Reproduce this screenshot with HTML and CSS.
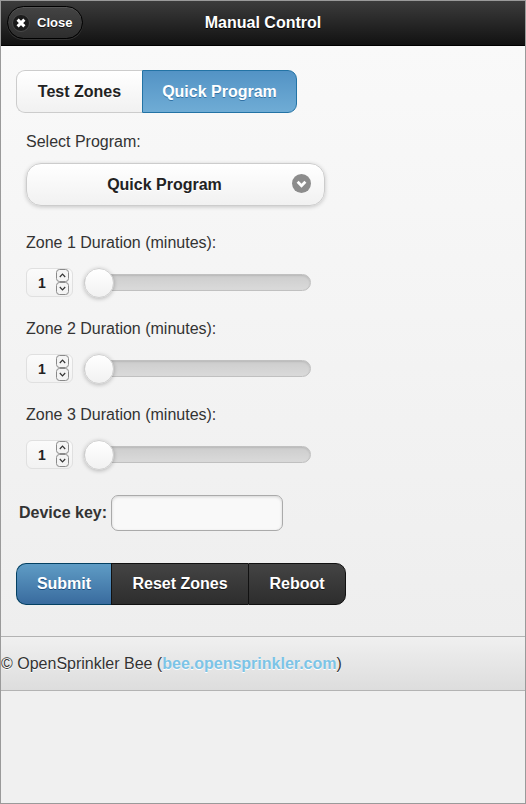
FILE: index.html
```html
<!DOCTYPE html>
<html>
<head>
<meta charset="utf-8">
<link rel="stylesheet" href="styles.css">
</head>
<body>
<div class="window">
  <header class="hdr">
    <a class="close-btn">
      <svg class="x-icon" width="18" height="18" viewBox="0 0 18 18"><circle cx="9" cy="9" r="8.5" fill="#1b1b1b" stroke="#4a4a4a" stroke-width="1"/><path d="M5.6 5.6 L12.4 12.4 M12.4 5.6 L5.6 12.4" stroke="#fff" stroke-width="3" stroke-linecap="butt"/></svg>
      <span>Close</span>
    </a>
    <h1 class="title">Manual Control</h1>
  </header>
  <main class="content">
    <div class="navbar">
      <span class="tab tab-first">Test Zones</span><span class="tab tab-active">Quick Program</span>
    </div>
    <div class="field">
      <div class="label label-first">Select Program:</div>
      <div class="select">
        <span class="select-text">Quick Program</span>
        <svg class="arrow" width="19" height="19" viewBox="0 0 19 19"><circle cx="9.5" cy="9.5" r="9.5" fill="#8c8c8c"/><path d="M5.6 7.8 L9.5 11.7 L13.4 7.8" stroke="#fff" stroke-width="2.8" fill="none"/></svg>
      </div>

      <div class="label label-zone">Zone 1 Duration (minutes):</div>
      <div class="row">
        <div class="spin"><span class="num">1</span><svg class="spin-arrows" width="13" height="27" viewBox="0 0 13 27"><rect x="0.5" y="0.5" width="12" height="12" rx="3" fill="#f4f4f4" stroke="#8a8a8a"/><rect x="0.5" y="13.5" width="12" height="12" rx="3" fill="#f4f4f4" stroke="#8a8a8a"/><path d="M3.8 8 L6.5 5.2 L9.2 8" stroke="#333" stroke-width="1.2" fill="none"/><path d="M3.8 18 L6.5 20.8 L9.2 18" stroke="#333" stroke-width="1.2" fill="none"/></svg></div>
        <div class="track"><span class="handle"></span></div>
      </div>

      <div class="label label-next">Zone 2 Duration (minutes):</div>
      <div class="row">
        <div class="spin"><span class="num">1</span><svg class="spin-arrows" width="13" height="27" viewBox="0 0 13 27"><rect x="0.5" y="0.5" width="12" height="12" rx="3" fill="#f4f4f4" stroke="#8a8a8a"/><rect x="0.5" y="13.5" width="12" height="12" rx="3" fill="#f4f4f4" stroke="#8a8a8a"/><path d="M3.8 8 L6.5 5.2 L9.2 8" stroke="#333" stroke-width="1.2" fill="none"/><path d="M3.8 18 L6.5 20.8 L9.2 18" stroke="#333" stroke-width="1.2" fill="none"/></svg></div>
        <div class="track"><span class="handle"></span></div>
      </div>

      <div class="label label-next">Zone 3 Duration (minutes):</div>
      <div class="row">
        <div class="spin"><span class="num">1</span><svg class="spin-arrows" width="13" height="27" viewBox="0 0 13 27"><rect x="0.5" y="0.5" width="12" height="12" rx="3" fill="#f4f4f4" stroke="#8a8a8a"/><rect x="0.5" y="13.5" width="12" height="12" rx="3" fill="#f4f4f4" stroke="#8a8a8a"/><path d="M3.8 8 L6.5 5.2 L9.2 8" stroke="#333" stroke-width="1.2" fill="none"/><path d="M3.8 18 L6.5 20.8 L9.2 18" stroke="#333" stroke-width="1.2" fill="none"/></svg></div>
        <div class="track"><span class="handle"></span></div>
      </div>
    </div>

    <div class="device">
      <label class="device-label">Device key:</label>
      <input class="device-input" type="password">
    </div>

    <div class="btn-group">
      <span class="btn btn-submit">Submit</span><span class="btn btn-dark btn-reset">Reset Zones</span><span class="btn btn-dark btn-reboot">Reboot</span>
    </div>
  </main>
  <footer class="ftr">© OpenSprinkler Bee (<a class="ftr-link">bee.opensprinkler.com</a>)</footer>
</div>
</body>
</html>
```

FILE: styles.css
```css
html, body {
  margin: 0;
  padding: 0;
}
body {
  font-family: "Liberation Sans", Arial, Helvetica, sans-serif;
  font-size: 16px;
  color: #333;
}
.window {
  width: 526px;
  height: 804px;
  box-sizing: border-box;
  border: 1px solid #9a9a9a;
  background: #f0f0f0;
  display: flex;
  flex-direction: column;
  overflow: hidden;
}

/* header */
.hdr {
  height: 44px;
  flex: none;
  border-bottom: 1px solid #000;
  background: linear-gradient(#3c3c3c, #111);
  display: grid;
  grid-template-columns: 1fr auto 1fr;
  align-items: start;
}
.close-btn {
  justify-self: start;
  margin: 5px 0 0 6px;
  height: 31px;
  border: 1px solid #000;
  border-radius: 17px;
  background: linear-gradient(#444, #2d2d2d);
  box-shadow: 0 1px 0 rgba(255,255,255,0.12), inset 0 1px 0 rgba(255,255,255,0.1);
  display: flex;
  align-items: center;
  padding: 0 10px 0 4px;
  color: #fff;
  font-weight: bold;
  font-size: 13px;
  text-shadow: 0 1px 0 #111;
}
.x-icon {
  display: block;
  margin-right: 7px;
}
.title {
  margin: 0;
  line-height: 44px;
  font-size: 16px;
  font-weight: bold;
  color: #fff;
  text-shadow: 0 1px 0 #000;
}

/* content */
.content {
  flex: none;
  padding: 24px 15px 31px;
  background: linear-gradient(#f9f9f9, #eeeeee);
}
.navbar {
  display: flex;
}
.tab {
  box-sizing: border-box;
  height: 43px;
  display: flex;
  align-items: center;
  justify-content: center;
  font-weight: bold;
  font-size: 16px;
}
.tab-first {
  width: 126px;
  border: 1px solid #ccc;
  border-right: none;
  border-radius: 9px 0 0 9px;
  background: linear-gradient(#fff, #f1f1f1);
  color: #222;
  text-shadow: 0 1px 0 #fff;
}
.tab-active {
  width: 155px;
  border: 1px solid #2373a5;
  border-radius: 0 9px 9px 0;
  background: linear-gradient(#5393c5, #6facd5);
  color: #fff;
  text-shadow: 0 1px 0 #3373a5;
}
.field {
  padding-left: 10px;
}
.label {
  line-height: 20px;
  color: #333;
}
.label-first { margin-top: 19px; }
.label-zone { margin-top: 27px; }
.label-next { margin-top: 22px; }
.select {
  margin-top: 11px;
  width: 299px;
  height: 43px;
  box-sizing: border-box;
  border: 1px solid #ccc;
  border-radius: 15px;
  background: linear-gradient(#fff, #f1f1f1);
  box-shadow: 0 1px 4px rgba(0,0,0,0.2);
  display: flex;
  align-items: center;
  padding: 0 13px 0 25px;
}
.select-text {
  flex: 1;
  text-align: center;
  font-weight: bold;
  color: #222;
  text-shadow: 0 1px 0 #fff;
}
.arrow {
  display: block;
  margin-left: 15px;
  margin-top: -2px;
}
.row {
  margin-top: 14px;
  height: 30px;
  display: flex;
  align-items: center;
}
.spin {
  width: 47px;
  height: 29px;
  margin-top: 1px;
  box-sizing: border-box;
  border: 1px solid #e0e0e0;
  border-radius: 6px;
  background: linear-gradient(#fbfbfb, #f2f2f2);
  display: flex;
  align-items: center;
  padding-left: 11px;
}
.num {
  font-weight: bold;
  font-size: 14px;
  color: #222;
  width: 8px;
  margin-right: 10px;
}
.spin-arrows {
  display: block;
}
.track {
  position: relative;
  margin-left: 11px;
  width: 227px;
  height: 17px;
  box-sizing: border-box;
  border: 1px solid #c0c0c0;
  border-radius: 9px;
  background: linear-gradient(#cdcdcd, #dadada);
  box-shadow: inset 0 1px 2px rgba(0,0,0,0.1);
}
.handle {
  position: absolute;
  left: -1px;
  top: -7px;
  width: 30px;
  height: 30px;
  box-sizing: border-box;
  border-radius: 50%;
  border: 1px solid #d0d0d0;
  background: linear-gradient(#fff, #f1f1f1);
  box-shadow: 0 1px 4px rgba(0,0,0,0.25);
}

/* device key */
.device {
  margin-top: 26px;
  display: flex;
  align-items: center;
  padding-left: 3px;
}
.device-label {
  font-weight: bold;
  color: #333;
  margin-right: 4px;
}
.device-input {
  width: 172px;
  height: 36px;
  box-sizing: border-box;
  border: 1px solid #aaa;
  border-radius: 7px;
  background: #f9f9f9;
  box-shadow: inset 0 1px 3px rgba(0,0,0,0.15);
  margin: 0;
  padding: 0 8px;
}

/* buttons */
.btn-group {
  margin-top: 32px;
  display: flex;
}
.btn {
  box-sizing: border-box;
  height: 42px;
  display: flex;
  align-items: center;
  justify-content: center;
  font-weight: bold;
  font-size: 16px;
  color: #fff;
}
.btn-submit {
  width: 95px;
  border: 1px solid #044062;
  border-right: none;
  border-radius: 10px 0 0 10px;
  background: linear-gradient(#5f9cc5, #396b9e);
  text-shadow: 0 1px 0 #194b7e;
}
.btn-dark {
  background: linear-gradient(#444, #2d2d2d);
  text-shadow: 0 1px 0 #111;
  border: 1px solid #111;
}
.btn-reset {
  width: 137px;
  border-right: none;
}
.btn-reboot {
  width: 98px;
  border-radius: 0 10px 10px 0;
}

/* footer */
.ftr {
  flex: none;
  height: 53px;
  border-top: 1px solid #b3b3b3;
  border-bottom: 1px solid #b3b3b3;
  background: linear-gradient(#f0f0f0, #dddddd);
  display: flex;
  align-items: center;
  color: #333;
  font-size: 16px;
  text-shadow: 0 1px 0 #fff;
}
.ftr-link {
  color: #7cc4e7;
  font-weight: bold;
}
```
